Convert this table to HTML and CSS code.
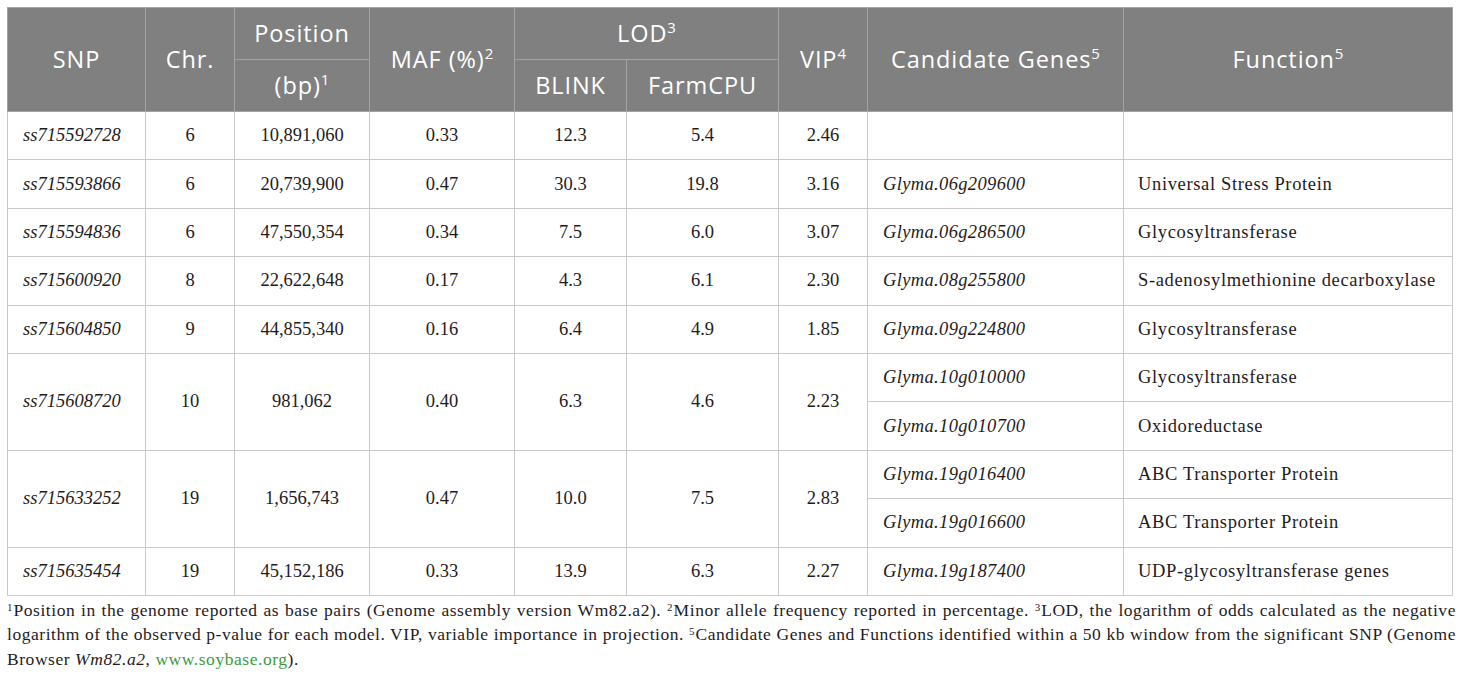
FILE: index.html
```html
<!DOCTYPE html>
<html lang="en">

<head>
    <meta charset="UTF-8">
    <title>Candidate genes table</title>
    <link rel="stylesheet" href="styles.css">
</head>

<body>
    <div class="wrap">
        <table class="snp-table">
            <colgroup>
                <col style="width: 138px">
                <col style="width: 89px">
                <col style="width: 135px">
                <col style="width: 145px">
                <col style="width: 112px">
                <col style="width: 152px">
                <col style="width: 89px">
                <col style="width: 256px">
                <col style="width: 329px">
            </colgroup>
            <thead>
                <tr class="head-top">
                    <th rowspan="2">SNP</th>
                    <th rowspan="2">Chr.</th>
                    <th>Position</th>
                    <th rowspan="2">MAF (%)<sup>2</sup></th>
                    <th colspan="2">LOD<sup>3</sup></th>
                    <th rowspan="2">VIP<sup>4</sup></th>
                    <th rowspan="2">Candidate Genes<sup>5</sup></th>
                    <th rowspan="2">Function<sup>5</sup></th>
                </tr>
                <tr class="head-sub">
                    <th>(bp)<sup>1</sup></th>
                    <th>BLINK</th>
                    <th>FarmCPU</th>
                </tr>
            </thead>
            <tbody>
                <tr>
                    <td class="snp">ss715592728</td>
                    <td>6</td>
                    <td>10,891,060</td>
                    <td>0.33</td>
                    <td>12.3</td>
                    <td>5.4</td>
                    <td>2.46</td>
                    <td class="gene"></td>
                    <td class="func"></td>
                </tr>
                <tr>
                    <td class="snp">ss715593866</td>
                    <td>6</td>
                    <td>20,739,900</td>
                    <td>0.47</td>
                    <td>30.3</td>
                    <td>19.8</td>
                    <td>3.16</td>
                    <td class="gene">Glyma.06g209600</td>
                    <td class="func">Universal Stress Protein</td>
                </tr>
                <tr>
                    <td class="snp">ss715594836</td>
                    <td>6</td>
                    <td>47,550,354</td>
                    <td>0.34</td>
                    <td>7.5</td>
                    <td>6.0</td>
                    <td>3.07</td>
                    <td class="gene">Glyma.06g286500</td>
                    <td class="func">Glycosyltransferase</td>
                </tr>
                <tr>
                    <td class="snp">ss715600920</td>
                    <td>8</td>
                    <td>22,622,648</td>
                    <td>0.17</td>
                    <td>4.3</td>
                    <td>6.1</td>
                    <td>2.30</td>
                    <td class="gene">Glyma.08g255800</td>
                    <td class="func">S-adenosylmethionine decarboxylase</td>
                </tr>
                <tr>
                    <td class="snp">ss715604850</td>
                    <td>9</td>
                    <td>44,855,340</td>
                    <td>0.16</td>
                    <td>6.4</td>
                    <td>4.9</td>
                    <td>1.85</td>
                    <td class="gene">Glyma.09g224800</td>
                    <td class="func">Glycosyltransferase</td>
                </tr>
                <tr>
                    <td class="snp" rowspan="2">ss715608720</td>
                    <td rowspan="2">10</td>
                    <td rowspan="2">981,062</td>
                    <td rowspan="2">0.40</td>
                    <td rowspan="2">6.3</td>
                    <td rowspan="2">4.6</td>
                    <td rowspan="2">2.23</td>
                    <td class="gene">Glyma.10g010000</td>
                    <td class="func">Glycosyltransferase</td>
                </tr>
                <tr>
                    <td class="gene">Glyma.10g010700</td>
                    <td class="func">Oxidoreductase</td>
                </tr>
                <tr>
                    <td class="snp" rowspan="2">ss715633252</td>
                    <td rowspan="2">19</td>
                    <td rowspan="2">1,656,743</td>
                    <td rowspan="2">0.47</td>
                    <td rowspan="2">10.0</td>
                    <td rowspan="2">7.5</td>
                    <td rowspan="2">2.83</td>
                    <td class="gene">Glyma.19g016400</td>
                    <td class="func">ABC Transporter Protein</td>
                </tr>
                <tr>
                    <td class="gene">Glyma.19g016600</td>
                    <td class="func">ABC Transporter Protein</td>
                </tr>
                <tr>
                    <td class="snp">ss715635454</td>
                    <td>19</td>
                    <td>45,152,186</td>
                    <td>0.33</td>
                    <td>13.9</td>
                    <td>6.3</td>
                    <td>2.27</td>
                    <td class="gene">Glyma.19g187400</td>
                    <td class="func">UDP-glycosyltransferase genes</td>
                </tr>
            </tbody>
        </table>

        <p class="notes"><sup>1</sup>Position in the genome reported as base pairs (Genome assembly version Wm82.a2). <sup>2</sup>Minor allele frequency reported in percentage. <sup>3</sup>LOD, the logarithm of odds calculated as the negative logarithm of the observed p&#8209;value for each model. VIP, variable importance in projection. <sup>5</sup>Candidate Genes and Functions identified within a 50 kb window from the significant SNP (Genome Browser <em>Wm82.a2</em>, <a href="#">www.soybase.org</a>).</p>
    </div>
</body>

</html>
```

FILE: styles.css
```css
html, body {
    margin: 0;
    background: #fff;
}

.wrap {
    padding: 7px 4px 0 7px;
}

.snp-table {
    border-collapse: collapse;
    table-layout: fixed;
    width: 1445px;
    border-top: 1px solid #d0d0d0;
}

/* header */
.snp-table th {
    background-color: #808080;
    color: #fff;
    font-family: "Open Sans", sans-serif;
    font-weight: 400;
    font-size: 23.5px;
    letter-spacing: 0.9px;
    border: 1px solid #a3a3a3;
    padding: 0;
    text-align: center;
    vertical-align: middle;
    line-height: 1;
}

.snp-table th sup {
    font-size: 15px;
    letter-spacing: 0;
    vertical-align: 9px;
    line-height: 0;
}

.head-top th {
    height: 51px;
}

.head-sub th {
    height: 51px;
}

/* body */
.snp-table td {
    font-family: "Liberation Serif", serif;
    font-size: 18.5px;
    color: #1f1b1c;
    border: 1px solid #c9c9c9;
    height: 47.4px;
    padding: 0 15px;
    text-align: center;
    vertical-align: middle;
}

.snp-table td.snp,
.snp-table td.gene {
    font-style: italic;
    text-align: left;
}

.snp-table td.gene {
    letter-spacing: 0.35px;
}

.snp-table td.func {
    text-align: left;
    padding: 0 0 0 14px;
    letter-spacing: 0.65px;
    white-space: nowrap;
}

.notes {
    margin: 2px 0 0;
    width: 1449px;
    font-family: "Liberation Serif", serif;
    font-size: 17.5px;
    letter-spacing: 0.55px;
    line-height: 24.5px;
    color: #1f1b1c;
    text-align: justify;
}

.notes sup {
    font-size: 11px;
    letter-spacing: 0;
    vertical-align: 5px;
    line-height: 0;
    margin-right: 1px;
}

.notes a {
    color: #3c9a3c;
    text-decoration: none;
}
```
